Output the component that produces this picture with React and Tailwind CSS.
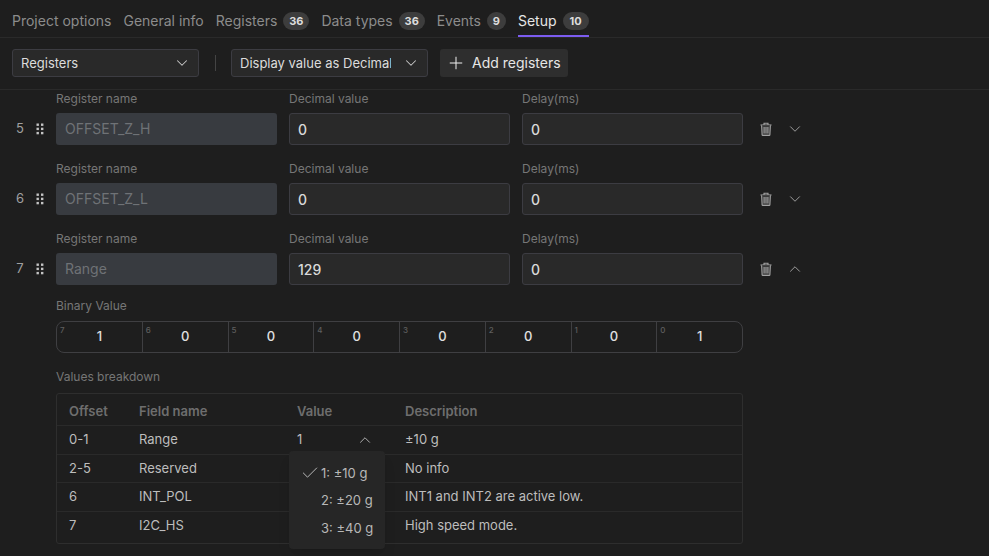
import React from "react";
import { ChevronDown, ChevronUp, Plus, Check } from "lucide-react";

function Trash() {
  return (
    <svg width="14" height="14" viewBox="0 0 14 14" fill="none" stroke="#a3a3a3" strokeWidth="1.1">
      <path d="M1.5 3h11" />
      <path d="M5 3V1.2h4V3" />
      <path d="M2.6 3.2l.5 9.6a.7.7 0 0 0 .7.6h6.4a.7.7 0 0 0 .7-.6l.5-9.6" fill="#3a3a3a" />
      <path d="M5.1 5v6.6M7 5v6.6M8.9 5v6.6" />
    </svg>
  );
}

function Grip() {
  return (
    <svg width="8" height="12" viewBox="0 0 8 12" fill="#c4c4c4">
      {[0, 1, 2].map((r) => (
        <React.Fragment key={r}>
          <rect x="0.5" y={0.5 + r * 4.2} width="2.4" height="2.4" />
          <rect x="5" y={0.5 + r * 4.2} width="2.4" height="2.4" />
        </React.Fragment>
      ))}
    </svg>
  );
}

function Tab({ label, count, active }) {
  return (
    <div className={`h-[37px] flex items-center gap-[6px] border-b-2 pt-[7px] ${active ? "border-[#7c5cf0] text-[#e6e6e6]" : "border-transparent text-[#8c8c8c]"}`}>
      <span className="text-[14px] leading-5">{label}</span>
      {count && (
        <span className={`h-[18px] rounded-full bg-[#3d3d3d] text-[#dcdcdc] text-[11px] font-bold flex items-center justify-center ${count.length > 1 ? "w-[26px]" : "w-[19px]"}`}>
          {count}
        </span>
      )}
    </div>
  );
}

function Field({ label, value, locked }) {
  return (
    <div className="w-[221px]">
      <div className="text-[12px] leading-4 text-[#767676] mb-[6px]">{label}</div>
      {locked ? (
        <div className="h-8 rounded-[3px] bg-[#383b40] px-[9px] pb-px flex items-center text-[14px] text-[#6f7276]">{value}</div>
      ) : (
        <div className="h-8 rounded-[3px] bg-[#292929] border border-[#3c3c42] px-2 flex items-center text-[14px] font-medium text-[#d9d9d9]">{value}</div>
      )}
    </div>
  );
}

function RegRow({ n, name, dec, open }) {
  return (
    <div className="flex items-end gap-3 h-[54px]">
      <div className="h-8 flex items-center">
        <span className="w-[16px] text-center text-[13px] text-[#a0a0a0] mr-[8px]">{n}</span>
        <Grip />
      </div>
      <div className="flex gap-3">
        <Field label="Register name" value={name} locked />
        <Field label="Decimal value" value={dec} />
        <Field label="Delay(ms)" value="0" />
      </div>
      <div className="h-8 flex items-center ml-[4px] gap-[13px]">
        <span className="w-[14px] flex justify-center"><Trash /></span>
        {open ? (
          <ChevronUp size={18} strokeWidth={1.2} color="#a8a8a8" />
        ) : (
          <ChevronDown size={18} strokeWidth={1.2} color="#a8a8a8" />
        )}
      </div>
    </div>
  );
}

const bits = [
  [7, 1],
  [6, 0],
  [5, 0],
  [4, 0],
  [3, 0],
  [2, 0],
  [1, 0],
  [0, 1],
];

const rows = [
  ["0-1", "Range", "1", "±10 g"],
  ["2-5", "Reserved", "", "No info"],
  ["6", "INT_POL", "", "INT1 and INT2 are active low."],
  ["7", "I2C_HS", "", "High speed mode."],
];

const rowClass = [
  "h-[29px] border-b border-[#2a2a2a] items-center",
  "h-[28px] border-b border-[#2a2a2a] items-center",
  "h-[29px] border-b border-[#2a2a2a] items-center",
  "h-[32px] items-start pt-[4px]",
];

export default function App() {
  return (
    <div className="w-[989px] h-[556px] overflow-hidden bg-[#1e1e1e] relative" style={{ fontFamily: "Inter, 'Liberation Sans', sans-serif" }}>
      <div className="h-[38px] border-b border-[#2a2a2a] px-3 flex gap-3">
        <Tab label="Project options" />
        <Tab label="General info" />
        <Tab label="Registers" count="36" />
        <Tab label="Data types" count="36" />
        <Tab label="Events" count="9" />
        <Tab label="Setup" count="10" active />
      </div>
      <div className="h-[52px] border-b border-[#2a2a2a] px-3 flex items-center pb-[2px]">
        <div className="w-[187px] h-7 rounded-[3px] bg-[#292929] border border-[#3c3c42] pl-2 pr-[7px] flex items-center justify-between text-[13px] text-[#dcdcdc]">
          <span className="pt-[2px]">Registers</span>
          <ChevronDown size={18} strokeWidth={1.4} color="#c8c8c8" />
        </div>
        <div className="w-px h-4 bg-[#444] ml-4 mr-[15px]" />
        <div className="w-[197px] h-7 rounded-[3px] bg-[#292929] border border-[#3c3c42] pl-2 pr-[7px] flex items-center justify-between text-[13px] text-[#dcdcdc]">
          <span className="w-[151px] pt-[2px] overflow-hidden whitespace-nowrap">Display value as Decimal</span>
          <ChevronDown size={18} strokeWidth={1.4} color="#c8c8c8" />
        </div>
        <div className="ml-3 w-[128px] h-7 rounded-[3px] bg-[#2e2e2e] flex items-center pl-[6px] gap-[6px] text-[14px] text-[#e6e6e6]">
          <Plus size={20} strokeWidth={1.2} color="#f0f0f0" />
          Add registers
        </div>
      </div>
      <div className="pl-3 pt-px">
        <div className="flex flex-col gap-4">
          <RegRow n="5" name="OFFSET_Z_H" dec="0" />
          <RegRow n="6" name="OFFSET_Z_L" dec="0" />
          <RegRow n="7" name="Range" dec="129" open />
        </div>
        <div className="ml-[44px] w-[687px] relative pt-[13px]">
          <div className="text-[12px] leading-4 text-[#767676] mb-[7px]">Binary Value</div>
          <div className="h-8 rounded-lg border border-[#3f3f42] flex">
            {bits.map(([i, v], idx) => (
              <div key={i} className={`flex-1 relative flex items-center justify-center text-[13px] font-medium text-[#e0e0e0] ${idx > 0 ? "border-l border-[#3f3f42]" : ""}`}>
                <span className="absolute left-[3px] top-[2px] text-[8px] leading-3 text-[#5e5e5e]">{i}</span>
                {v}
              </div>
            ))}
          </div>
          <div className="text-[12px] leading-4 text-[#767676] mt-4 mb-2">Values breakdown</div>
          <div className="h-[151px] rounded-[3px] border border-[#2e2e2e] text-[13px] text-[#bdbdbd]">
            <div className="h-[32px] flex items-center pt-[4px] border-b border-[#2a2a2a] text-[13px] font-semibold text-[#6e6e6e]">
              <div className="w-[82px] pl-3">Offset</div>
              <div className="w-[158px]">Field name</div>
              <div className="w-[108px]">Value</div>
              <div>Description</div>
            </div>
            {rows.map((r, i) => (
              <div key={r[0]} className={`flex ${rowClass[i]}`}>
                <div className="w-[82px] pl-3">{r[0]}</div>
                <div className="w-[158px]">{r[1]}</div>
                <div className="w-[108px] pr-[31px] flex items-center justify-between">
                  {r[2]}
                  {i === 0 && <ChevronUp size={18} strokeWidth={1.2} color="#bdbdbd" />}
                </div>
                <div>{r[3]}</div>
              </div>
            ))}
          </div>
          <div className="absolute left-[233px] top-[166px] w-[96px] h-[98px] rounded-[4px] bg-[#262626] pt-[8.5px] text-[13px] text-[#b8b8b8] shadow-lg">
            {["1: ±10 g", "2: ±20 g", "3: ±40 g"].map((t, i) => (
              <div key={t} className="h-[27.5px] flex items-center relative pl-[32px]">
                {i === 0 && <Check size={20} strokeWidth={1.2} color="#b8b8b8" className="absolute left-[11px]" />}
                {t}
              </div>
            ))}
          </div>
        </div>
      </div>
    </div>
  );
}
